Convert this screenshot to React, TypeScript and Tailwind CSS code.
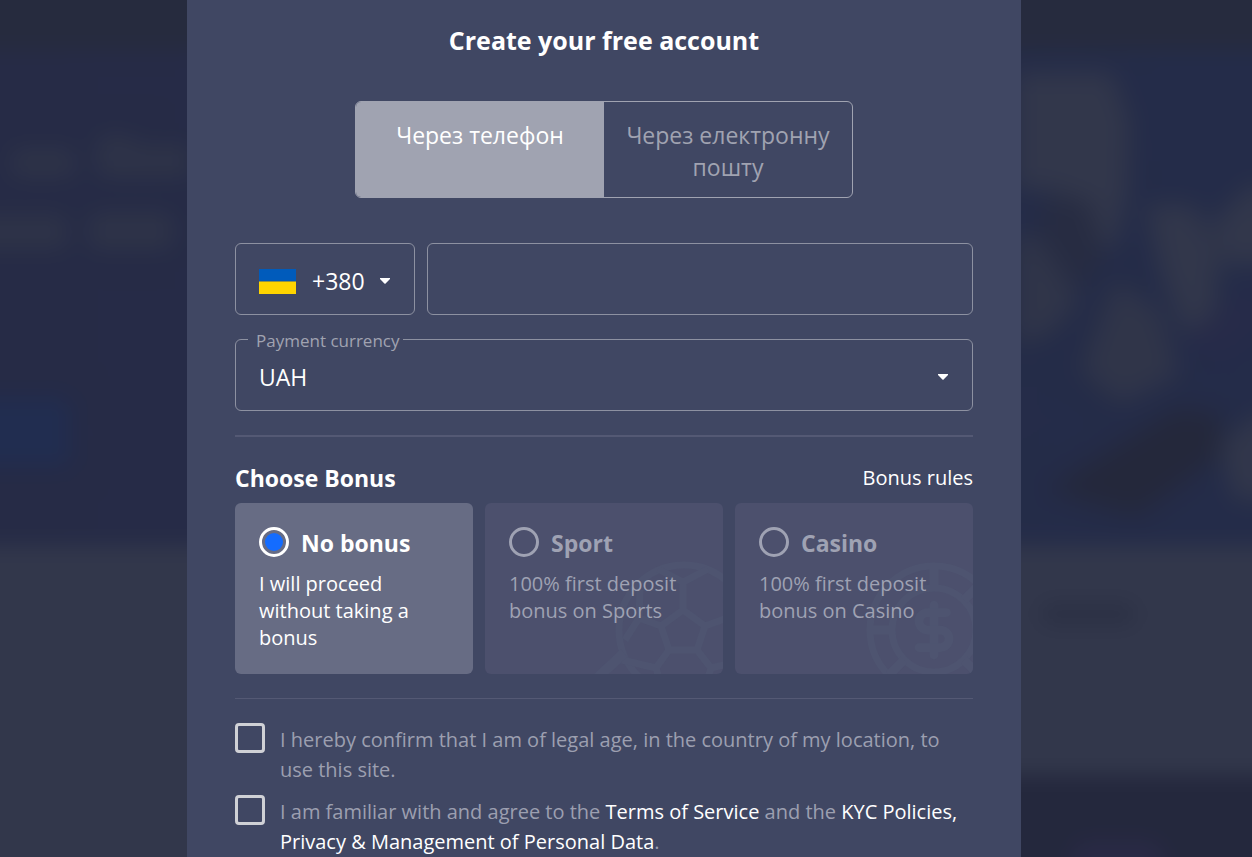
import { useState } from "react";
import { DollarSign } from "lucide-react";

const Caret = () => (
  <svg className="pointer-events-none shrink-0" width="10" height="6" viewBox="0 0 10 6">
    <path d="M0 0h10v1L5.6 5.6a1 1 0 0 1-1.2 0L0 1z" fill="#fff" />
  </svg>
);

const Flag = () => (
  <svg className="shrink-0" width="37" height="25" viewBox="0 0 37 25">
    <rect width="37" height="12.5" fill="#005bbb" />
    <rect y="12.5" width="37" height="12.5" fill="#ffd500" />
  </svg>
);

const Ball = () => (
  <svg
    className="absolute right-0 bottom-0"
    width="130"
    height="115"
    viewBox="108 56 130 115"
    fill="none"
    stroke="#4e5470"
    strokeWidth="7"
  >
    <circle cx="199" cy="127" r="65" />
    <path d="M198 107l22 16-8 24h-28l-8-24zM198 107V79M173 66l25 13 25-13M176 123l-22-8-14 22M154 115l1-28M220 123l22-8 10 12M242 115l-1-28M184 147l-13 18 6 20M171 165l-34-8M212 147l14 18-6 20M226 165l34-8" />
    <path d="M139 150l-30 28" strokeWidth="10" />
  </svg>
);

const Chip = () => (
  <svg
    className="absolute right-0 bottom-0"
    width="130"
    height="115"
    viewBox="108 56 130 115"
    fill="none"
    stroke="#4e5470"
    strokeWidth="7"
  >
    <circle cx="199" cy="127" r="64" />
    <circle cx="199" cy="127" r="42" />
    <path d="M199 63v22M135 127h22M154 172l15-15M244 172l-15-15M244 82l-15 15" strokeWidth="9" />
    <DollarSign x="169" y="97" width="60" height="60" stroke="#4e5470" strokeWidth={3.5} />
  </svg>
);

const bonuses = [
  { id: "none", title: "No bonus", text: "I will proceed without taking a bonus", art: null },
  { id: "sport", title: "Sport", text: "100% first deposit bonus on Sports", art: <Ball /> },
  { id: "casino", title: "Casino", text: "100% first deposit bonus on Casino", art: <Chip /> },
];

// Dimmed and blurred site behind the form
function Backdrop() {
  return (
    <div className="absolute inset-0 overflow-hidden bg-[#262b3f]" aria-hidden="true">
      <div className="absolute -inset-6 flex flex-col blur-[10px]">
        <div className="h-[74px] bg-[#262b3e]" />
        <div className="flex h-[496px] justify-between bg-linear-to-r from-[#262b46] to-[#242c49]">
          <svg className="blur-[6px]" width="214" height="496" viewBox="-24 50 214 496">
            <g fill="#2e3348">
              <rect x="10" y="148" width="66" height="30" rx="10" />
              <rect x="96" y="134" width="40" height="44" rx="10" />
              <rect x="110" y="144" width="90" height="34" rx="10" />
              <rect x="-30" y="214" width="98" height="36" rx="10" />
              <rect x="88" y="212" width="86" height="38" rx="10" />
            </g>
            <rect x="-40" y="398" width="110" height="68" rx="10" fill="#212d50" />
          </svg>
          <svg className="blur-[8px]" width="261" height="496" viewBox="1015 50 261 496">
            <path d="M1000 72h112l18 50-2 70-14 60-30-20-25-40-59-5z" fill="#32374b" />
            <path d="M1045 195l45 5 14 60-24 30-40-50z" fill="#272c42" />
            <path d="M1000 225l40 15 40 60-30 35-50 15z" fill="#303549" />
            <path d="M1080 370l35-90 45 30 20 65-60 30z" fill="#303549" />
            <path d="M1145 205l50 0 24 50-4 70-28 14-26-65z" fill="#32374b" />
            <path d="M1210 225l40-40h30v80h-55z" fill="#32374b" />
            <path d="M1180 340l80-60v50l-40 30z" fill="#272b49" />
            <path d="M1048 490l130-82 44 8-2 40-84 60z" fill="#24283b" />
            <path d="M1220 445l35-30h24v85h-45z" fill="#32374b" />
          </svg>
        </div>
        <div className="flex h-[229px] justify-end bg-[#32374b]">
          <div className="mt-14 mr-[140px] h-6 w-24 rounded-full bg-[#2c3145]" />
        </div>
        <div className="flex grow">
          <div className="w-1/2 bg-[#32374b]" />
          <div className="flex w-1/2 items-end justify-end bg-[#24283d]">
            <div className="mr-[110px] h-10 w-24 rounded-full bg-[#2a2a46] blur-[6px]" />
          </div>
        </div>
      </div>
    </div>
  );
}

export default function App() {
  const [method, setMethod] = useState("phone");
  const [bonus, setBonus] = useState("none");

  return (
    <div className="relative min-h-screen pr-11 font-['Open_Sans','Noto_Sans',sans-serif] text-white">
      <Backdrop />
      <main className="relative mx-auto min-h-screen max-w-[834px] bg-[#404763] px-12 pt-6">
        <h1 className="text-center text-[25px] leading-8 font-bold">Create your free account</h1>

        {/* Sign up method */}
        <div className="mx-auto mt-[45px] flex max-w-[498px] overflow-hidden rounded-md border border-[#a0a3b1] text-[23px] leading-8">
          <button
            type="button"
            onClick={() => setMethod("phone")}
            className={
              method === "phone"
                ? "flex w-1/2 justify-center bg-[#a0a3b1] px-4 pt-[17px] pb-3.5"
                : "flex w-1/2 justify-center px-4 pt-[17px] pb-3.5 text-[#a0a3b1]"
            }
          >
            Через телефон
          </button>
          <button
            type="button"
            onClick={() => setMethod("email")}
            className={
              method === "email"
                ? "w-1/2 bg-[#a0a3b1] px-4 pt-[17px] pb-3.5"
                : "w-1/2 px-4 pt-[17px] pb-3.5 text-[#a0a3b1]"
            }
          >
            Через електронну пошту
          </button>
        </div>

        {/* Phone */}
        <div className="mt-[45px] flex h-[72px] gap-3">
          <div className="flex w-[180px] items-center rounded-md border border-[#8d91a1] px-[23px] pt-1">
            <Flag />
            <select
              aria-label="Country code"
              className="ml-4 w-[68px] appearance-none bg-transparent text-[23px] leading-8 outline-none"
            >
              <option>+380</option>
            </select>
            <Caret />
          </div>
          <input
            type="tel"
            aria-label="Phone number"
            className="min-w-0 grow rounded-md border border-[#8d91a1] bg-transparent px-6 text-[23px] outline-none"
          />
        </div>

        {/* Currency */}
        <fieldset className="mt-3 rounded-md border border-[#8d91a1] px-3">
          <legend className="pt-1 pr-1 pl-2 text-[17px] leading-5 text-[#a0a3b1]">
            <label htmlFor="currency">Payment currency</label>
          </legend>
          <div className="flex h-[59px] items-center pr-3 pb-2 pl-[11px]">
            <select
              id="currency"
              className="grow appearance-none bg-transparent text-[23px] leading-8 outline-none"
            >
              <option>UAH</option>
            </select>
            <Caret />
          </div>
        </fieldset>

        <hr className="mt-6 border-t-2 border-[#545974]" />

        {/* Bonus */}
        <div className="mt-6 mb-2 flex items-center justify-between leading-[34px]">
          <h2 className="text-[23px] font-bold">Choose Bonus</h2>
          <a href="#rules" className="text-[20px]">
            Bonus rules
          </a>
        </div>
        <div className="grid grid-cols-3 gap-3">
          {bonuses.map((b) => (
            <label
              key={b.id}
              className={
                b.id === bonus
                  ? "relative min-h-[171px] overflow-hidden rounded-md bg-[#676c84] p-6 pb-[19px]"
                  : "relative min-h-[171px] overflow-hidden rounded-md bg-[#4c506d] p-6 pb-[19px] text-[#9fa2b3]"
              }
            >
              {b.art}
              <span className="relative flex items-start gap-3">
                <input
                  type="radio"
                  name="bonus"
                  checked={b.id === bonus}
                  onChange={() => setBonus(b.id)}
                  className="size-[30px] appearance-none rounded-full border-[3px] border-current bg-clip-content p-[3px] checked:bg-[#146cff]"
                />
                <span className="text-[23px] leading-8 font-bold">{b.title}</span>
              </span>
              <span className="relative mt-[11px] block text-[20px] leading-[27px]">{b.text}</span>
            </label>
          ))}
        </div>

        <hr className="mt-6 border-[#545974]" />

        {/* Agreements */}
        <div className="mt-6 flex flex-col gap-2.5 text-[20px] leading-[30px] text-[#9c9fb0]">
          <div className="flex gap-[15px]">
            <input
              id="age"
              type="checkbox"
              className="size-[30px] shrink-0 appearance-none rounded border-[3px] border-[#d0d1d6] checked:bg-[#146cff]"
            />
            <label htmlFor="age" className="pt-0.5">
              I hereby confirm that I am of legal age, in the country of my location, to use this site.
            </label>
          </div>
          <div className="flex gap-[15px]">
            <input
              id="terms"
              type="checkbox"
              className="size-[30px] shrink-0 appearance-none rounded border-[3px] border-[#d0d1d6] checked:bg-[#146cff]"
            />
            <label htmlFor="terms" className="pt-0.5">
              I am familiar with and agree to the{" "}
              <a href="#terms-of-service" className="text-white">
                Terms of Service
              </a>{" "}
              and the{" "}
              <a href="#kyc" className="text-white">
                KYC Policies, Privacy &amp; Management of Personal Data
              </a>
              .
            </label>
          </div>
        </div>
      </main>
    </div>
  );
}
